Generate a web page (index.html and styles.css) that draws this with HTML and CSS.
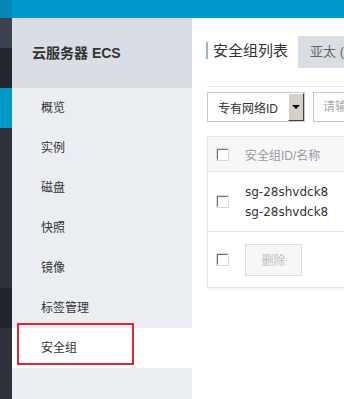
FILE: index.html
```html
<!DOCTYPE html>
<html lang="zh-CN">
  <head>
    <meta charset="UTF-8" />
    <title>安全组列表</title>
    <link rel="stylesheet" href="styles.css">
  </head>
  <body>
    <div class="rail">
      <div class="r1"></div>
      <div class="r2"></div>
      <div class="r3"></div>
      <div class="r4"></div>
      <div class="r5"></div>
      <div class="r6"></div>
      <div class="r7"></div>
    </div>
    <div class="page">
      <div class="topbar"></div>
      <div class="wrap">
        <aside class="sidebar">
          <div class="side-head">云服务器 ECS</div>
          <ul class="menu">
            <li>概览</li>
            <li>实例</li>
            <li>磁盘</li>
            <li>快照</li>
            <li>镜像</li>
            <li>标签管理</li>
            <li class="valgt">安全组<span class="mark"></span></li>
          </ul>
        </aside>
        <main class="content">
          <div class="title-row">
            <h2 class="title">安全组列表</h2>
            <div class="tab">亚太 (</div>
          </div>
          <div class="filters">
            <div class="select">
              <span>专有网络ID</span>
              <span class="drop"><i></i></span>
            </div>
            <div class="search">请输入</div>
          </div>
          <div class="tbl">
            <div class="row head">
              <span class="cb"></span>
              <span>安全组ID/名称</span>
            </div>
            <div class="row item">
              <span class="cb"></span>
              <span class="ids">sg-28shvdck8<br>sg-28shvdck8</span>
            </div>
            <div class="row foot">
              <span class="cb"></span>
              <button class="del" disabled>删除</button>
            </div>
          </div>
        </main>
      </div>
    </div>
  </body>
</html>
```

FILE: styles.css
```css
body {
  margin: 0;
  width: 344px;
  height: 399px;
  overflow: hidden;
  display: flex;
  font-family: "Liberation Sans", "Noto Sans CJK SC", sans-serif;
  color: #333;
}

.rail {
  width: 12px;
  flex-shrink: 0;
  display: flex;
  flex-direction: column;
}
.r1 { height: 18px; background-color: #0787b5; }
.r2 { height: 30px; background-color: #3b4250; }
.r3 { height: 40px; background-color: #24272d; }
.r4 { height: 40px; background-color: #0099cc; }
.r5 { height: 160px; background-color: #2d3139; }
.r6 { height: 40px; background-color: #22252b; }
.r7 { flex: 1; background-color: #2d3139; }

.page {
  flex: 1;
  min-width: 0;
  display: flex;
  flex-direction: column;
}

.topbar {
  height: 18px;
  background-color: #0099cc;
}

.wrap {
  flex: 1;
  min-width: 0;
  display: flex;
}

.sidebar {
  width: 180px;
  flex-shrink: 0;
  background-color: #eaedf1;
}

.side-head {
  height: 70px;
  line-height: 70px;
  padding-left: 20px;
  background-color: #d9dee4;
  font-weight: bold;
  font-size: 14px;
  color: #333;
}

.menu {
  list-style: none;
  margin: 0;
  padding: 0;
}
.menu li {
  position: relative;
  height: 40px;
  line-height: 40px;
  padding-left: 29px;
  font-size: 12px;
  color: #333;
}
.menu li.valgt {
  background-color: #fff;
}
.mark {
  position: absolute;
  left: 5px;
  top: -5px;
  width: 113px;
  height: 38px;
  border: 2px solid #e0262d;
}

.content {
  flex: 1;
  min-width: 0;
  background-color: #fff;
  padding-left: 15px;
  overflow: hidden;
}

.title-row {
  height: 69px;
  border-bottom: 1px solid #e8eaed;
  display: flex;
  align-items: flex-start;
  padding-top: 18px;
  box-sizing: border-box;
}
.title {
  margin: 0;
  margin-top: 6px;
  height: 17px;
  line-height: 17px;
  font-size: 15px;
  font-weight: normal;
  color: #333;
  border-left: 2px solid #9fb4c9;
  padding-left: 5px;
  margin-left: -1px;
  white-space: nowrap;
}
.tab {
  margin-left: 10px;
  height: 32px;
  line-height: 32px;
  padding: 0 0 0 12px;
  width: 60px;
  flex-shrink: 0;
  background-color: #d9dee4;
  color: #666;
  font-size: 13px;
  white-space: nowrap;
}

.filters {
  display: flex;
  gap: 8px;
  margin-top: 5px;
  height: 30px;
}
.select {
  width: 98px;
  flex-shrink: 0;
  box-sizing: border-box;
  border: 1px solid #c8c8c8;
  display: flex;
  align-items: center;
  justify-content: space-between;
  font-size: 12px;
  color: #333;
  padding-left: 10px;
}
.drop {
  width: 16px;
  height: 28px;
  box-sizing: border-box;
  background-color: #d4d0c8;
  border: 1px solid #fff;
  border-right-color: #404040;
  border-bottom-color: #404040;
  display: flex;
  align-items: center;
  justify-content: center;
}
.drop i {
  width: 0;
  height: 0;
  border-left: 4px solid transparent;
  border-right: 4px solid transparent;
  border-top: 4px solid #000;
}
.search {
  width: 200px;
  flex-shrink: 0;
  box-sizing: border-box;
  border: 1px solid #c8c8c8;
  line-height: 28px;
  padding-left: 9px;
  font-size: 12px;
  color: #aaa;
  white-space: nowrap;
}

.tbl {
  margin-top: 14px;
  width: 300px;
  border: 1px solid #e3e5e8;
  box-shadow: 0 4px 3px -2px #f1f3f5;
}
.row {
  display: flex;
  align-items: center;
  padding-left: 9px;
  border-top: 1px solid #e3e5e8;
}
.row:first-child {
  border-top: none;
}
.head {
  height: 34px;
  background-color: #f6f7f9;
  font-size: 12px;
  color: #999;
}
.item {
  height: 59px;
  font-size: 13px;
  font-family: "DejaVu Sans", "Noto Sans CJK SC", sans-serif;
  color: #333;
}
.ids {
  line-height: 20px;
  font-size: 12px;
}
.foot {
  height: 55px;
}
.cb {
  width: 11px;
  height: 11px;
  box-sizing: border-box;
  border: 1px solid #fff;
  border-top-color: #707070;
  border-left-color: #707070;
  outline: 1px solid #d8d8d8;
  background-color: #fff;
  margin-right: 17px;
  flex-shrink: 0;
}
.del {
  width: 57px;
  height: 32px;
  background-color: #f7f7f7;
  border: 1px solid #dcdcdc;
  color: #bbb;
  font-size: 12px;
  font-family: "Noto Sans CJK SC", sans-serif;
}
```
